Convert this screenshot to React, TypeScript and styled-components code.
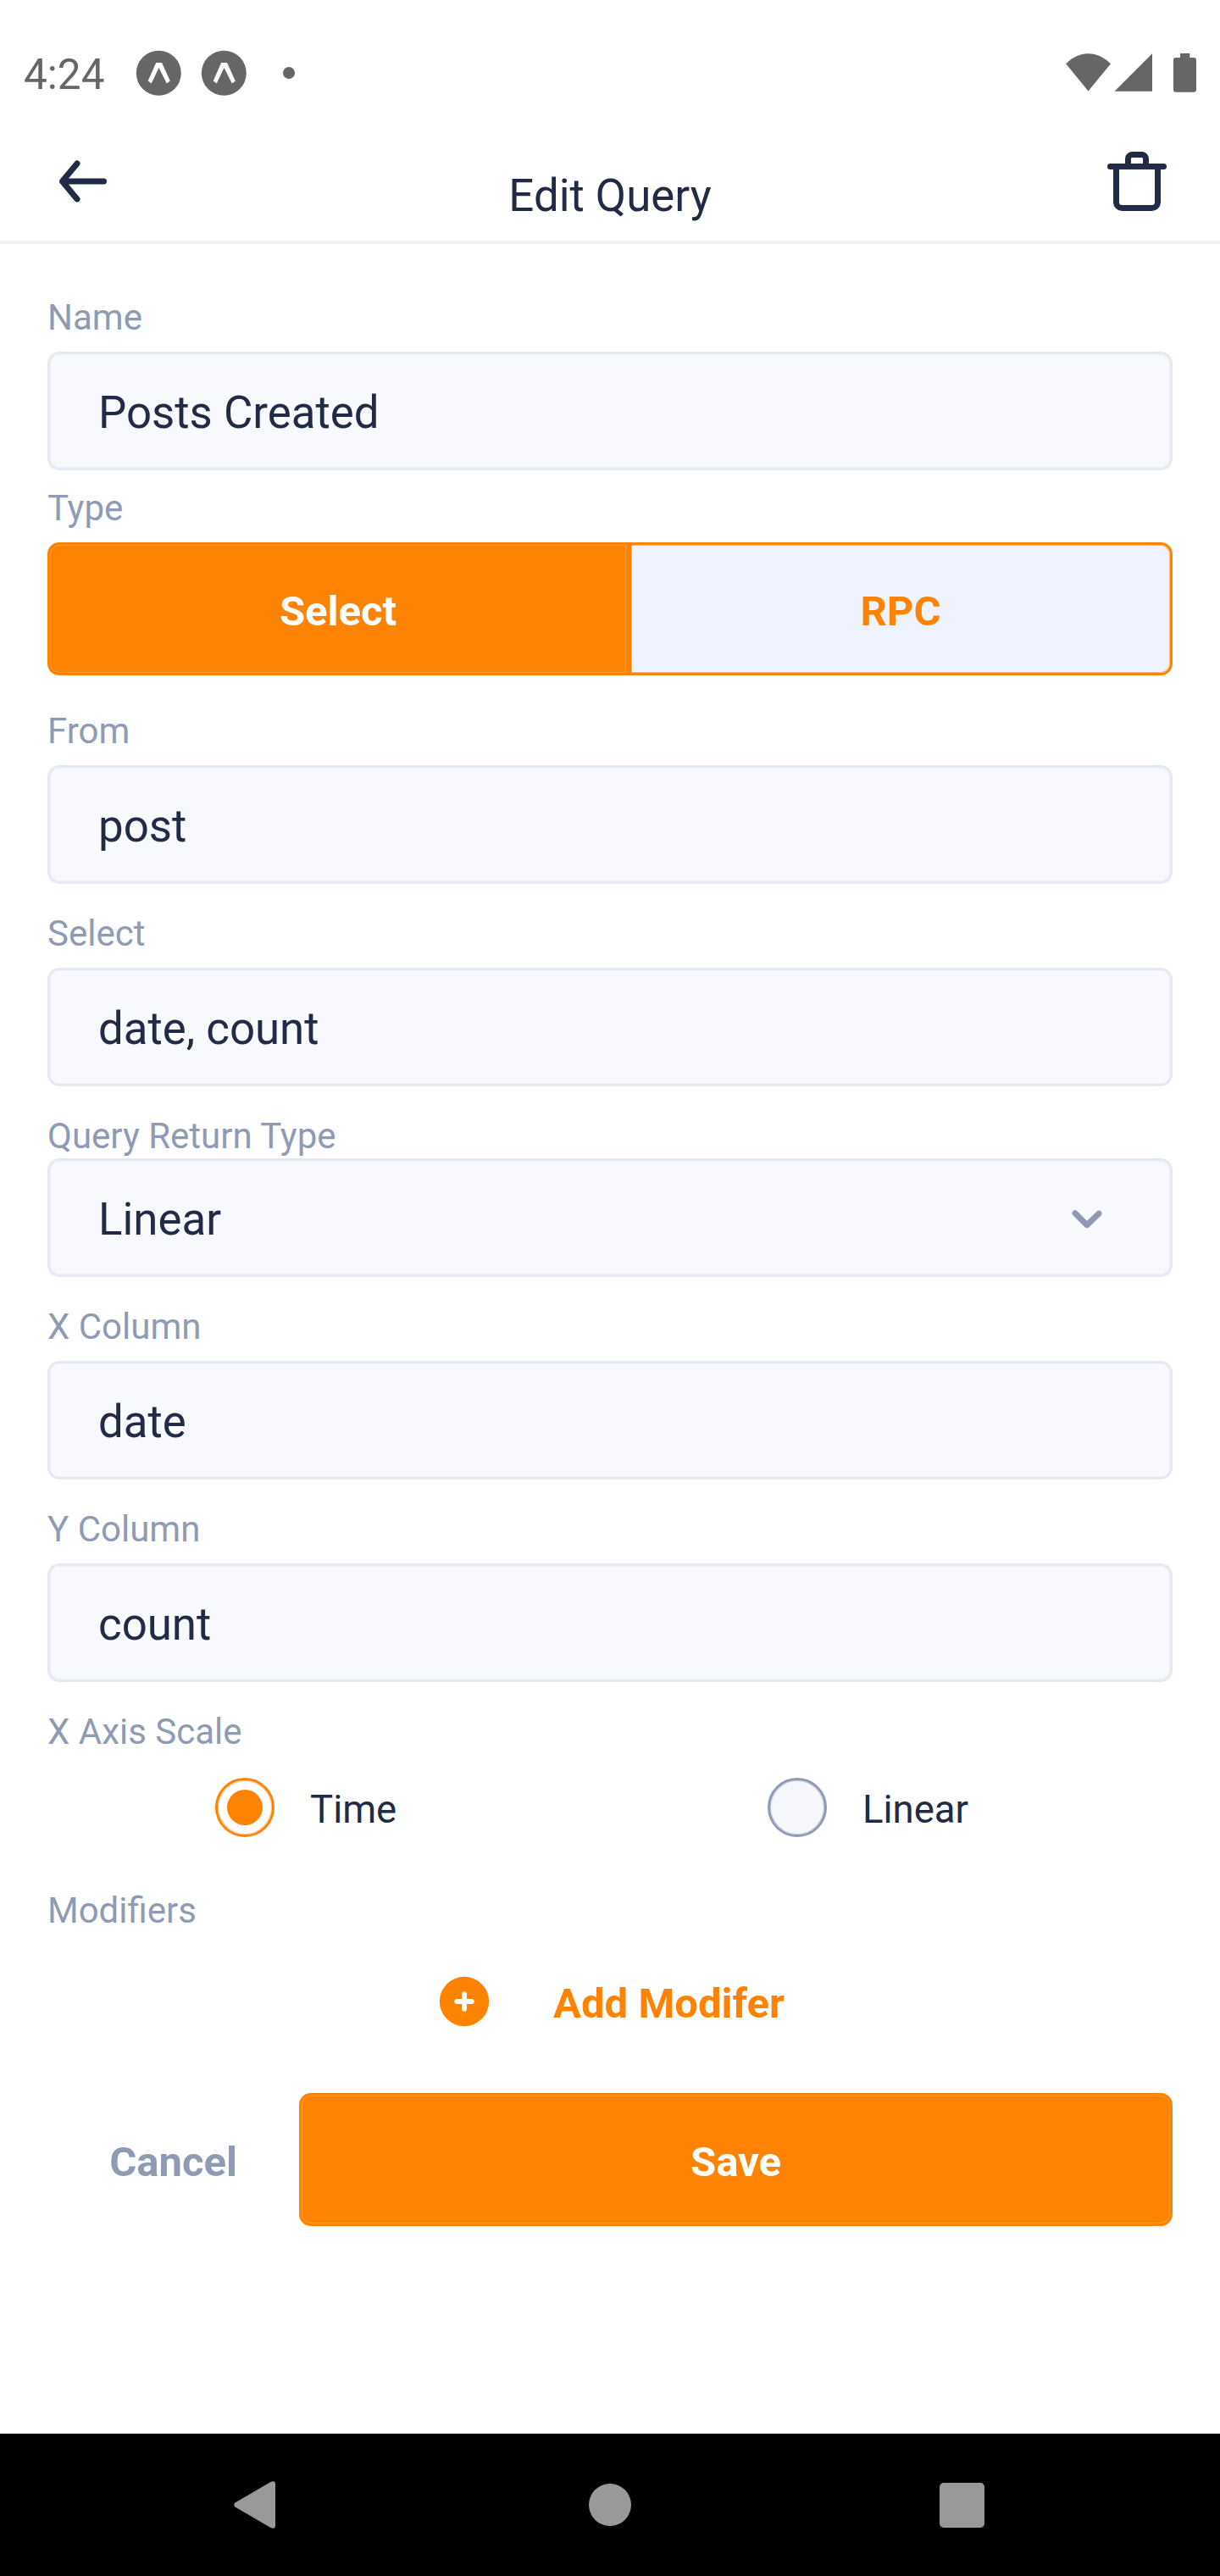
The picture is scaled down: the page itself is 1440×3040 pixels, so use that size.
import React, { useState } from "react";
import styled, { createGlobalStyle } from "styled-components";

const color = {
  ink: "#222b45",
  hint: "#8f9bb3",
  line: "#e4e9f2",
  lineSoft: "#eef1f8",
  field: "#f7f9fc",
  primary: "#ff8303",
  primaryEdge: "#ff9a33",
  status: "#666666",
};

const GlobalStyle = createGlobalStyle`
  * { box-sizing: border-box; }
  body { margin: 0; background: #fff; }
  button { font: inherit; margin: 0; padding: 0; border: 0; background: none; color: inherit; }
`;

const Screen = styled.div`
  width: 1440px;
  height: 3040px;
  display: flex;
  flex-direction: column;
  background: #fff;
  color: ${color.ink};
  font-family: Roboto, "Noto Sans", sans-serif;
  overflow: hidden;
`;

const StatusBar = styled.header`
  height: 172px;
  flex: none;
  display: flex;
  align-items: flex-start;
  justify-content: space-between;
  padding: 59px 27px 0 28px;
  color: ${color.status};
`;

const Clock = styled.span`
  width: 132px;
  padding-top: 1px;
  font-size: 49.5px;
  line-height: 57px;
`;

const StatusGroup = styled.div`
  display: flex;
  align-items: flex-start;
`;

const StatusIcon = styled.svg`
  display: block;
  flex: none;
`;

const TopBar = styled.nav`
  height: 116px;
  flex: none;
  display: grid;
  grid-template-columns: 84px 1fr 84px;
  align-items: start;
  padding: 0 56px;
  border-bottom: 4px solid #edf1f7;
`;

const IconButton = styled.button`
  height: 84px;
  display: flex;
`;

const Title = styled.h1`
  margin: 28px 0 0;
  font-size: 52.8px;
  font-weight: 400;
  line-height: 62px;
  text-align: center;
`;

const Form = styled.main`
  flex: 1;
  display: flex;
  flex-direction: column;
  padding: 0 56px;
`;

const Field = styled.div<{ $before: number; $gap?: number }>`
  display: flex;
  flex-direction: column;
  gap: ${(p) => p.$gap ?? 16}px;
  margin-top: ${(p) => p.$before}px;
`;

const Label = styled.label`
  height: 49px;
  color: ${color.hint};
  font-size: 42px;
  line-height: 49px;
`;

const Control = styled.div`
  height: 140px;
  display: flex;
  align-items: center;
  justify-content: space-between;
  padding: 0 56px 0 57px;
  border: 3px solid ${color.line};
  border-radius: 14px;
  box-shadow: inset 0 0 0 1px ${color.lineSoft};
  background: ${color.field};
`;

const Value = styled.span`
  padding-top: 3px;
  font-size: 52.8px;
  line-height: 62px;
`;

const Segmented = styled.div`
  height: 157px;
  display: grid;
  grid-template-columns: 686px 642px;
`;

const Segment = styled.button<{ $active: boolean; $side: "left" | "right" }>`
  border: 3px solid ${color.primary};
  border-radius: ${(p) => (p.$side === "left" ? "14px 0 0 14px" : "0 14px 14px 0")};
  box-shadow: inset 0 0 0 1px ${(p) => (p.$active ? color.primaryEdge : "#f7b97b")};
  background: ${(p) => (p.$active ? color.primary : "#eff3ff")};
  color: ${(p) => (p.$active ? "#fff" : color.primary)};
  padding-top: 5px;
  font-size: 49px;
  font-weight: 700;
  line-height: 57px;
`;

const RadioRow = styled.div`
  display: grid;
  grid-template-columns: 652px 1fr;
  padding-left: 198px;
`;

const RadioOption = styled.button`
  height: 70px;
  display: flex;
  align-items: center;
  gap: 42px;
  font-size: 45.5px;
  line-height: 54px;
`;

const RadioMark = styled.span<{ $on: boolean }>`
  width: 70px;
  height: 70px;
  display: grid;
  place-items: center;
  border: 3px solid ${(p) => (p.$on ? color.primary : color.hint)};
  border-radius: 50%;
  box-shadow: inset 0 0 0 1px ${(p) => (p.$on ? "#ffc183" : "#c2c9d6")};
  background: ${(p) => (p.$on ? "#fff" : "#f5f7fa")};
  &::after {
    content: "";
    width: 42px;
    height: 42px;
    border-radius: 50%;
    background: ${(p) => (p.$on ? color.primary : "transparent")};
  }
`;

const RadioText = styled.span`
  padding-top: 5px;
`;

const AddButton = styled.button`
  height: 70px;
  display: flex;
  align-items: center;
  align-self: center;
  gap: 70px;
  margin: 48px 1px 0 0;
  color: ${color.primary};
  font-size: 49px;
  font-weight: 700;
  line-height: 57px;
`;

const AddText = styled.span`
  padding-top: 5px;
`;

const Actions = styled.div`
  height: 157px;
  display: grid;
  grid-template-columns: 297px 1fr;
  margin-top: 73px;
`;

const CancelButton = styled.button`
  padding: 5px 0 0;
  color: ${color.hint};
  font-size: 49px;
  font-weight: 700;
  line-height: 57px;
`;

const SaveButton = styled(CancelButton)`
  border: 3px solid ${color.primary};
  border-radius: 14px;
  box-shadow: inset 0 0 0 1px ${color.primaryEdge};
  background: ${color.primary};
  color: #fff;
`;

const SystemNav = styled.footer`
  height: 168px;
  flex: none;
  display: grid;
  grid-template-columns: 1fr 50px 1fr;
  align-items: center;
  padding: 0 278px 0 276px;
  background: #000;
  & > :nth-child(2) { margin-left: -1px; }
  & > :last-child { justify-self: end; }
`;

const EvaIcon = ({ d, size = 84, fill = color.ink }: { d: string; size?: number; fill?: string }) => (
  <StatusIcon width={size} height={size} viewBox="0 0 24 24" fill={fill}>
    <path d={d} />
  </StatusIcon>
);

const arrowBack =
  "M19 11H7.14l3.63-4.36a1 1 0 1 0-1.54-1.28l-5 6a1.19 1.19 0 0 0-.09.15c0 .05 0 .08-.07.13A1 1 0 0 0 4 12a1 1 0 0 0 .07.36c0 .05 0 .08.07.13a1.19 1.19 0 0 0 .09.15l5 6A1 1 0 0 0 10 19a1 1 0 0 0 .64-.23 1 1 0 0 0 .13-1.41L7.14 13H19a1 1 0 0 0 0-2z";
const trash =
  "M21 6h-5V4.33A2.42 2.42 0 0 0 13.5 2h-3A2.42 2.42 0 0 0 8 4.33V6H3a1 1 0 0 0 0 2h1v11a3 3 0 0 0 3 3h10a3 3 0 0 0 3-3V8h1a1 1 0 0 0 0-2zM10 4.33c0-.16.21-.33.5-.33h3c.29 0 .5.17.5.33V6h-4zM18 19a1 1 0 0 1-1 1H7a1 1 0 0 1-1-1V8h12z";
const chevronDown =
  "M12 15.5a1 1 0 0 1-.71-.29l-4-4a1 1 0 1 1 1.42-1.42L12 13.1l3.3-3.18a1 1 0 1 1 1.38 1.44l-4 3.86a1 1 0 0 1-.68.28z";
const plusCircle =
  "M12 2a10 10 0 1 0 10 10A10 10 0 0 0 12 2zm3 11h-2v2a1 1 0 0 1-2 0v-2H9a1 1 0 0 1 0-2h2V9a1 1 0 0 1 2 0v2h2a1 1 0 0 1 0 2z";

const AppBadge = () => (
  <StatusIcon width="77" height="54" viewBox="0 0 77 54">
    <circle cx="27.3" cy="27.3" r="26.5" fill={color.status} />
    <path d="M24.2 15H31L40.8 36.5 36.8 39.5 27.5 21 18.7 39.5 14.7 36.5Z" fill="#fff" />
  </StatusIcon>
);

export default function App() {
  const [type, setType] = useState("Select");
  const [scale, setScale] = useState("Time");

  return (
    <Screen>
      <GlobalStyle />
      <StatusBar>
        <StatusGroup>
          <Clock>4:24</Clock>
          <AppBadge />
          <AppBadge />
          <StatusIcon width="54" height="54" viewBox="0 0 54 54">
            <circle cx="27" cy="27" r="7" fill={color.status} />
          </StatusIcon>
        </StatusGroup>
        <StatusIcon width="155" height="50" viewBox="1258 59 155 50" fill={color.status}>
          <path d="M1258.2 75.2C1274 59.2 1295 59.2 1311 75.2L1284.5 107.5Z" />
          <path d="M1360 63.3V107.8H1315.5Z" />
          <path d="M1393 63h11.3v5h4.7a3 3 0 0 1 3 3v34.7a3 3 0 0 1-3 3h-21a3 3 0 0 1-3-3V71a3 3 0 0 1 3-3h5z" />
        </StatusIcon>
      </StatusBar>

      <TopBar>
        <IconButton aria-label="Back">
          <EvaIcon d={arrowBack} />
        </IconButton>
        <Title>Edit Query</Title>
        <IconButton aria-label="Delete">
          <EvaIcon d={trash} />
        </IconButton>
      </TopBar>

      <Form>
        <Field $before={62}>
          <Label>Name</Label>
          <Control><Value>Posts Created</Value></Control>
        </Field>
        <Field $before={20}>
          <Label>Type</Label>
          <Segmented>
            <Segment $side="left" $active={type === "Select"} onClick={() => setType("Select")}>Select</Segment>
            <Segment $side="right" $active={type === "RPC"} onClick={() => setType("RPC")}>RPC</Segment>
          </Segmented>
        </Field>
        <Field $before={41}>
          <Label>From</Label>
          <Control><Value>post</Value></Control>
        </Field>
        <Field $before={34}>
          <Label>Select</Label>
          <Control><Value>date, count</Value></Control>
        </Field>
        <Field $before={34} $gap={2}>
          <Label>Query Return Type</Label>
          <Control>
            <Value>Linear</Value>
            <EvaIcon d={chevronDown} fill={color.hint} />
          </Control>
        </Field>
        <Field $before={34}>
          <Label>X Column</Label>
          <Control><Value>date</Value></Control>
        </Field>
        <Field $before={34}>
          <Label>Y Column</Label>
          <Control><Value>count</Value></Control>
        </Field>
        <Field $before={34} $gap={30}>
          <Label>X Axis Scale</Label>
          <RadioRow>
            {["Time", "Linear"].map((name) => (
              <RadioOption key={name} onClick={() => setScale(name)}>
                <RadioMark $on={scale === name} />
                <RadioText>{name}</RadioText>
              </RadioOption>
            ))}
          </RadioRow>
        </Field>
        <Field $before={62}>
          <Label>Modifiers</Label>
        </Field>
        <AddButton>
          <EvaIcon d={plusCircle} size={70} fill={color.primary} />
          <AddText>Add Modifer</AddText>
        </AddButton>
        <Actions>
          <CancelButton>Cancel</CancelButton>
          <SaveButton>Save</SaveButton>
        </Actions>
      </Form>

      <SystemNav>
        <StatusIcon width="49" height="56" viewBox="0 0 49 56" fill="#999">
          <path d="M1.5 25.4 43.5 1Q49 -1.5 49 4V52Q49 57.5 43.5 55L1.5 30.6Q-1 28 1.5 25.4Z" />
        </StatusIcon>
        <StatusIcon width="52" height="50" viewBox="0 0 52 50" fill="#999">
          <circle cx="27" cy="25" r="25" />
        </StatusIcon>
        <StatusIcon width="53" height="53" viewBox="0 0 53 53" fill="#999">
          <rect width="53" height="53" rx="5" />
        </StatusIcon>
      </SystemNav>
    </Screen>
  );
}
